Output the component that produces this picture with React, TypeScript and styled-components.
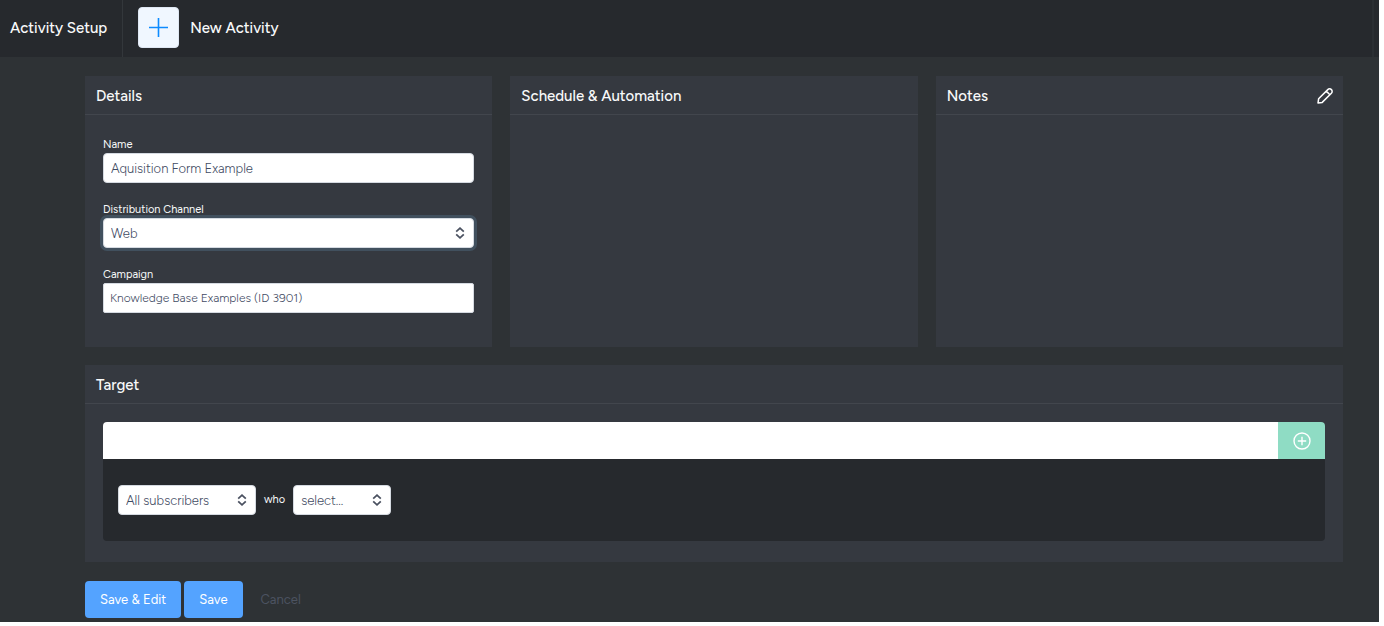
import React from "react";
import styled, { createGlobalStyle } from "styled-components";

const GlobalStyle = createGlobalStyle`
  *, *::before, *::after { box-sizing: border-box; }
  body {
    margin: 0;
    background: #fff;
    color: #f8f9fa;
    font-family: Figtree, Inter, "Liberation Sans", sans-serif;
    font-size: 14px;
    line-height: 20px;
  }
  h1, h2, p { margin: 0; }
  button, input, select { font: inherit; }
`;

const Page = styled.div`
  min-height: calc(100vh - 4px);
  margin: 0 5px 4px 0;
  background: #2e3235;
`;

const TopBar = styled.header`
  display: flex;
  height: 57px;
  background: #26292d;
`;

const BarTitle = styled.h1`
  display: flex;
  align-items: center;
  padding: 0 15px 2px 10px;
  border-right: 1px solid #33373b;
  font-size: 15px;
  font-weight: 500;
`;

const BarAction = styled.div`
  display: flex;
  flex: 1;
  align-items: center;
  gap: 11px;
  padding: 0 0 2px 15px;
  margin-right: 5px;
  border-right: 2px solid #2b2f33;
  font-size: 15px;
  font-weight: 500;
`;

const NewButton = styled.button`
  display: flex;
  align-items: center;
  justify-content: center;
  width: 41px;
  height: 41px;
  padding: 0;
  border: 1px solid #dee7f3;
  border-radius: 4px;
  background: #f0f7ff;
  color: #0d8bff;
`;

const Form = styled.form`
  display: grid;
  gap: 18px;
  padding: 19px 36px 4px 85px;
`;

const Columns = styled.div`
  display: grid;
  grid-template-columns: repeat(3, 1fr);
  gap: 18px;
`;

const Panel = styled.section`
  background: #353940;
`;

const PanelHead = styled.header`
  display: flex;
  align-items: center;
  justify-content: space-between;
  height: 39px;
  padding: 1px 10px 0 11px;
  border-bottom: 1px solid #42464d;
`;

const PanelTitle = styled.h2`
  font-size: 15px;
  font-weight: 500;
`;

const IconButton = styled.button`
  display: flex;
  padding: 0;
  border: 0;
  background: none;
  color: #fff;
`;

const PanelBody = styled.div<{ $top: number; $bottom: number }>`
  padding: ${(p) => p.$top}px 18px ${(p) => p.$bottom}px;
`;

const Fields = styled.div`
  display: grid;
  gap: 17px;
`;

const Field = styled.div`
  display: grid;
`;

const Label = styled.label`
  height: 18px;
  font-size: 11px;
  line-height: 20px;
`;

const TextInput = styled.input<{ $tight?: boolean }>`
  width: 100%;
  height: 30px;
  padding: 0 ${(p) => (p.$tight ? 6 : 7)}px;
  border: 1px solid #d5dae1;
  border-radius: ${(p) => (p.$tight ? 2 : 4)}px;
  background: #fff;
  color: #3f4b63;
  font-size: ${(p) => (p.$tight ? 12 : 13)}px;
  font-weight: 300;
`;

const SelectWrap = styled.div<{ $width?: number }>`
  position: relative;
  width: ${(p) => (p.$width ? `${p.$width}px` : "100%")};
  color: #4a5160;

  svg {
    position: absolute;
    top: 9px;
    right: 9px;
    pointer-events: none;
  }
`;

const Select = styled.select<{ $focused?: boolean }>`
  display: block;
  width: 100%;
  height: 30px;
  padding: 1px 28px 0 7px;
  border: 1px solid #d5dae1;
  border-radius: 4px;
  background: #fff;
  box-shadow: ${(p) => (p.$focused ? "0 0 0 3px #41505e" : "none")};
  color: #3f4b63;
  font-size: 13px;
  font-weight: 300;
  appearance: none;
`;

const TargetBox = styled.div`
  overflow: hidden;
  border-radius: 4px;
  background: #26292d;
`;

const SearchRow = styled.div`
  display: flex;
  height: 37px;
`;

const SearchInput = styled.input`
  flex: 1;
  min-width: 0;
  padding: 0 12px;
  border: 0;
  background: #fff;
  color: #3f4b63;
`;

const AddButton = styled.button`
  display: flex;
  align-items: center;
  justify-content: center;
  width: 47px;
  padding: 0;
  border: 0;
  background: #8fdcc4;
  color: #fff;
`;

const RuleRow = styled.div`
  display: flex;
  align-items: center;
  gap: 8px;
  padding: 26px 15px;
  font-size: 11px;
`;

const Actions = styled.div`
  display: flex;
  gap: 3px;
  padding-top: 1px;
`;

const PrimaryButton = styled.button`
  height: 37px;
  padding: 1px 15px 0;
  border: 0;
  border-radius: 4px;
  background: #54a3ff;
  color: #fff;
  font-size: 13px;
`;

const CancelButton = styled(PrimaryButton)`
  background: none;
  color: #4c5361;
`;

const Chevrons = () => (
  <svg width="10" height="12" viewBox="0 0 10 12" fill="none" stroke="currentColor" strokeWidth="1.8" aria-hidden="true">
    <path d="M1.2 4.6 5 1.2l3.8 3.4M1.2 7.4 5 10.8l3.8-3.4" />
  </svg>
);

const Pencil = () => (
  <svg width="16" height="16" viewBox="0 0 16 16" fill="none" stroke="currentColor" strokeWidth="1.5" strokeLinejoin="round" aria-hidden="true">
    <path d="M1 15l.6-4.2L10.8 1.6a2.3 2.3 0 0 1 3.6 3.6L5.2 14.4zM9.3 3.1l3.6 3.6" />
  </svg>
);

const Plus = () => (
  <svg width="19" height="19" viewBox="0 0 19 19" fill="none" stroke="currentColor" strokeWidth="1.6" aria-hidden="true">
    <path d="M9.5 0v19M0 9.5h19" />
  </svg>
);

const PlusCircle = () => (
  <svg width="18" height="18" viewBox="0 0 18 18" fill="none" stroke="currentColor" strokeWidth="1.4" aria-hidden="true">
    <circle cx="9" cy="9" r="8" />
    <path d="M9 4.8v8.4M4.8 9h8.4" />
  </svg>
);

export default function App() {
  return (
    <>
      <GlobalStyle />
      <Page>
        <TopBar>
          <BarTitle>Activity Setup</BarTitle>
          <BarAction>
            <NewButton type="button" aria-label="Add activity"><Plus /></NewButton>
            <span>New Activity</span>
          </BarAction>
        </TopBar>
        <Form onSubmit={(e) => e.preventDefault()}>
          <Columns>
            <Panel>
              <PanelHead><PanelTitle>Details</PanelTitle></PanelHead>
              <PanelBody $top={20} $bottom={34}>
                <Fields>
                  <Field>
                    <Label htmlFor="name">Name</Label>
                    <TextInput id="name" defaultValue="Aquisition Form Example" />
                  </Field>
                  <Field>
                    <Label htmlFor="channel">Distribution Channel</Label>
                    <SelectWrap>
                      <Select id="channel" $focused><option>Web</option></Select>
                      <Chevrons />
                    </SelectWrap>
                  </Field>
                  <Field>
                    <Label htmlFor="campaign">Campaign</Label>
                    <TextInput id="campaign" $tight defaultValue="Knowledge Base Examples (ID 3901)" />
                  </Field>
                </Fields>
              </PanelBody>
            </Panel>
            <Panel>
              <PanelHead><PanelTitle>Schedule &amp; Automation</PanelTitle></PanelHead>
            </Panel>
            <Panel>
              <PanelHead>
                <PanelTitle>Notes</PanelTitle>
                <IconButton type="button" aria-label="Edit notes"><Pencil /></IconButton>
              </PanelHead>
            </Panel>
          </Columns>
          <Panel>
            <PanelHead><PanelTitle>Target</PanelTitle></PanelHead>
            <PanelBody $top={18} $bottom={21}>
              <TargetBox>
                <SearchRow>
                  <SearchInput aria-label="Target" />
                  <AddButton type="button" aria-label="Add target"><PlusCircle /></AddButton>
                </SearchRow>
                <RuleRow>
                  <SelectWrap $width={138}>
                    <Select aria-label="Audience"><option>All subscribers</option></Select>
                    <Chevrons />
                  </SelectWrap>
                  <span>who</span>
                  <SelectWrap $width={98}>
                    <Select aria-label="Condition"><option>select...</option></Select>
                    <Chevrons />
                  </SelectWrap>
                </RuleRow>
              </TargetBox>
            </PanelBody>
          </Panel>
          <Actions>
            <PrimaryButton type="submit">Save &amp; Edit</PrimaryButton>
            <PrimaryButton type="button">Save</PrimaryButton>
            <CancelButton type="button">Cancel</CancelButton>
          </Actions>
        </Form>
      </Page>
    </>
  );
}
